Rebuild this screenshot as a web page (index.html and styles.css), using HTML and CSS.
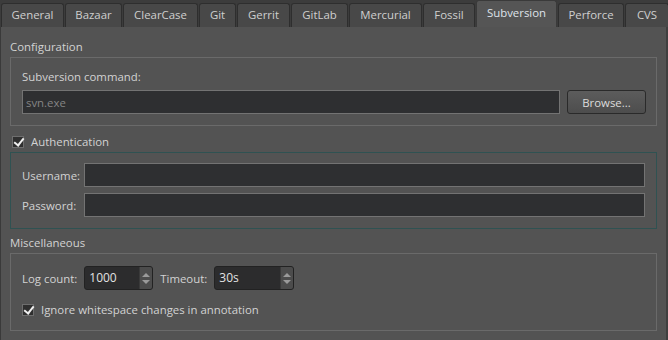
FILE: index.html
```html
<!DOCTYPE html>
<html lang="en">
<head>
  <meta charset="UTF-8" />
  <title>Version Control Settings</title>
  <link rel="stylesheet" href="styles.css">
</head>
<body>

<div class="tabs">
  <div class="tab">General</div>
  <div class="tab">Bazaar</div>
  <div class="tab">ClearCase</div>
  <div class="tab">Git</div>
  <div class="tab">Gerrit</div>
  <div class="tab">GitLab</div>
  <div class="tab">Mercurial</div>
  <div class="tab">Fossil</div>
  <div class="tab active">Subversion</div>
  <div class="tab">Perforce</div>
  <div class="tab">CVS</div>
</div>

<div class="pane">
  <div class="group-title">Configuration</div>
  <div class="group">
    <div class="field-label">Subversion command:</div>
    <div class="row">
      <input type="text" class="text-input grow" placeholder="svn.exe" />
      <button class="btn">Browse...</button>
    </div>
  </div>

  <label class="check-title">
    <span class="check checked"></span>
    Authentication
  </label>
  <div class="group auth">
    <div class="form-row">
      <span class="form-label">Username:</span>
      <input type="text" class="text-input grow" />
    </div>
    <div class="form-row">
      <span class="form-label">Password:</span>
      <input type="password" class="text-input grow" />
    </div>
  </div>

  <div class="group-title misc">Miscellaneous</div>
  <div class="group misc-box">
    <div class="row">
      <span class="spin-label">Log count:</span>
      <div class="spin spin-count">
        <span class="spin-value">1000</span>
        <span class="spin-arrows"><i class="up"></i><i class="down"></i></span>
      </div>
      <span class="spin-label">Timeout:</span>
      <div class="spin spin-timeout">
        <span class="spin-value">30s</span>
        <span class="spin-arrows"><i class="up"></i><i class="down"></i></span>
      </div>
    </div>
    <label class="check-row">
      <span class="check checked"></span>
      Ignore whitespace changes in annotation
    </label>
  </div>
</div>

</body>
</html>
```

FILE: styles.css
```css
* {
  box-sizing: border-box;
}
body {
  margin: 0;
  width: 668px;
  height: 340px;
  overflow: hidden;
  background: #3c3c3c;
  font-family: "Open Sans", sans-serif;
  font-size: 11.4px;
  color: #d2d2d2;
}

/* Tab strip */
.tabs {
  display: flex;
  align-items: flex-end;
  height: 27px;
  padding-left: 1px;
  gap: 1px;
}
.tab {
  flex: none;
  height: 24px;
  line-height: 22px;
  background: #484848;
  border: 1px solid #2e2e2e;
  border-bottom: none;
  border-radius: 3px 3px 0 0;
  color: #cfcfcf;
  text-align: center;
}
.tab:nth-child(1) { width: 63px; }
.tab:nth-child(2) { width: 57px; }
.tab:nth-child(3) { width: 75px; }
.tab:nth-child(4) { width: 37px; }
.tab:nth-child(5) { width: 53px; }
.tab:nth-child(6) { width: 57px; }
.tab:nth-child(7) { width: 73px; }
.tab:nth-child(8) { width: 52px; }
.tab:nth-child(9) { width: 81px; }
.tab:nth-child(10) { width: 66px; }
.tab:nth-child(11) { width: 44px; }
.tab.active {
  height: 27px;
  line-height: 24px;
  background: #555555;
  border-color: #3a3a3a;
  color: #dfe3ea;
}

/* Tab pane */
.pane {
  height: 313px;
  background: #535353;
  border-left: 1px solid #3a3a3a;
  border-right: 2px solid #3f3f3f;
  padding: 10px 9px 0 9px;
}
.group-title {
  line-height: 20px;
}
.group-title.misc {
  margin-top: 4px;
}
.group {
  border: 1px solid #6a6a6a;
  padding: 10px 11px 11px 11px;
}
.group.auth {
  border-color: #2f5252;
}
.group.misc-box {
  padding-top: 12px;
  padding-bottom: 12px;
}
.field-label {
  line-height: 18px;
  margin-bottom: 4px;
}
.row {
  display: flex;
  align-items: center;
  gap: 7px;
}
.grow {
  flex: 1;
}

.text-input {
  height: 24px;
  background: #2e2f31;
  border: 1px solid #737373;
  color: #d2d2d2;
  font-family: inherit;
  font-size: 11.4px;
  padding: 0 3px;
  outline: none;
}
.text-input::placeholder {
  color: #858585;
}

.btn {
  width: 79px;
  height: 24px;
  background: linear-gradient(#5c5c5c, #4d4d4d);
  border: 1px solid #2a2a2a;
  border-radius: 3px;
  color: #dcdcdc;
  font-family: inherit;
  font-size: 11.4px;
  margin-right: -1px;
}

/* Checkboxes */
.check-title,
.check-row {
  display: flex;
  align-items: center;
  gap: 7px;
}
.check-title {
  line-height: 21px;
  margin-top: 5px;
  padding-left: 2px;
}
.check-row {
  margin-top: 12px;
  line-height: 16px;
}
.check {
  position: relative;
  width: 12px;
  height: 12px;
  background: #2f2f2f;
  border: 1px solid #6e6e6e;
}
.check.checked::after {
  content: "";
  position: absolute;
  left: 3px;
  top: -1px;
  width: 4px;
  height: 8px;
  border: solid #f0f0f0;
  border-width: 0 2px 2px 0;
  transform: rotate(38deg);
}

/* Auth form */
.form-row {
  display: flex;
  align-items: center;
}
.form-row + .form-row {
  margin-top: 6px;
}
.form-label {
  width: 62px;
}

/* Spin boxes */
.spin {
  display: flex;
  height: 24px;
  background: #2c2c2d;
  border: 1px solid #222;
  border-radius: 3px;
  overflow: hidden;
}
.spin-count {
  width: 69px;
}
.spin-timeout {
  width: 80px;
}
.spin-value {
  flex: 1;
  line-height: 22px;
  padding-left: 4px;
  color: #e2e2e2;
  font-size: 12px;
}
.spin-arrows {
  width: 13px;
  display: flex;
  flex-direction: column;
  justify-content: center;
  align-items: center;
  gap: 3px;
  background: #4c4c4c;
  border-left: 1px solid #3a3a3a;
}
.spin-arrows i {
  width: 0;
  height: 0;
  border-left: 4px solid transparent;
  border-right: 4px solid transparent;
}
.spin-arrows .up {
  border-bottom: 4px solid #9a9a9a;
}
.spin-arrows .down {
  border-top: 4px solid #9a9a9a;
}
```
